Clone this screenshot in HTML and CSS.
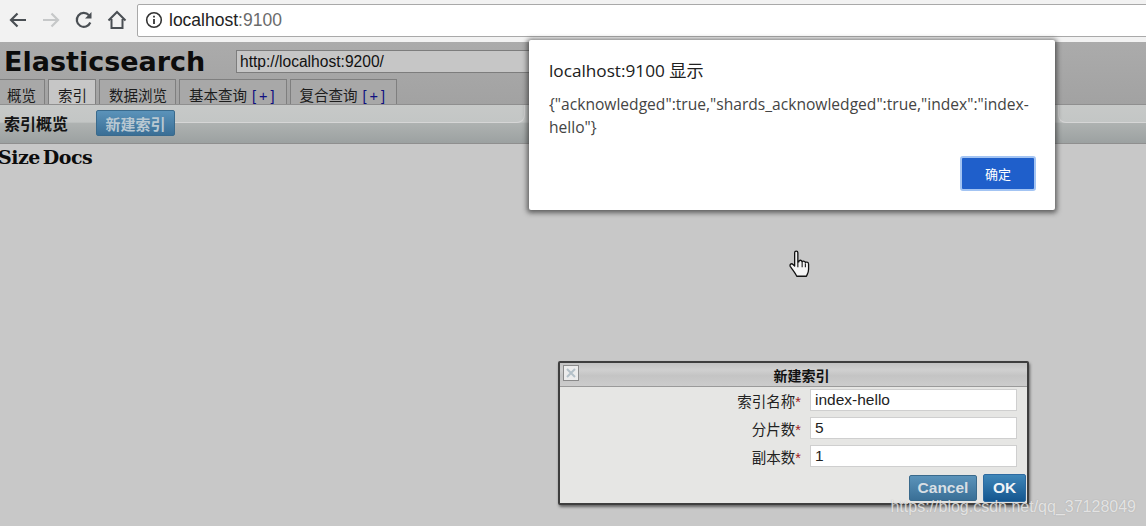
FILE: index.html
```html
<!doctype html>
<html>
    <head>
        <title>Elasticsearch</title>
        <meta charset="utf-8">
        <link rel="stylesheet" href="styles.css">
    </head>

    <body>
        <div class="toolbar">
            <svg class="nav" width="24" height="24" viewBox="0 0 24 24"><path d="M20 12H5M11.500 5.500L5 12l6.500 6.500" fill="none" stroke="#4a4f54" stroke-width="2.200"/></svg>
            <svg class="nav" width="24" height="24" viewBox="0 0 24 24"><path d="M4 12h15M12.500 5.500L19 12l-6.500 6.500" fill="none" stroke="#c6c8c9" stroke-width="2.200"/></svg>
            <svg class="nav" width="24" height="24" viewBox="0 0 24 24"><path d="M18.300 14.500A7 7 0 1 1 17 7.200" fill="none" stroke="#4a4f54" stroke-width="2.200"/><path d="M19.500 4v6.500H13z" fill="#4a4f54"/></svg>
            <svg class="nav" width="24" height="24" viewBox="0 0 24 24"><path d="M3.500 12.500L12 4l8.500 8.500M6.500 11v9h11v-9" fill="none" stroke="#4a4f54" stroke-width="2"/></svg>
            <div class="omnibox">
                <svg width="18" height="18" viewBox="0 0 16 16"><circle cx="8" cy="8" r="6.500" fill="none" stroke="#333" stroke-width="1.400"/><path d="M8 7v4.500M8 4.200v1.600" stroke="#333" stroke-width="1.600"/></svg>
                <span class="host">localhost<span class="port">:9100</span></span>
            </div>
        </div>

        <div class="page">
            <div class="header">
                <div class="title_row">
                    <h1>Elasticsearch</h1>
                    <input class="cluster" type="text" value="http://localhost:9200/">
                </div>
                <div class="tabs">
                    <div class="tab">概览</div>
                    <div class="tab active">索引</div>
                    <div class="tab">数据浏览</div>
                    <div class="tab">基本查询 <span class="plus">[+]</span></div>
                    <div class="tab">复合查询 <span class="plus">[+]</span></div>
                </div>
            </div>

            <div class="subbar">
                <span class="subtitle">索引概览</span>
                <div class="btn new_index">新建索引</div>
                <div class="subbar_line left"></div>
                <div class="subbar_line right"></div>
            </div>

            <div class="table_head"><span>Size</span><span>Docs</span></div>
        </div>

        <div class="alert">
            <div class="alert_title">localhost:9100 显示</div>
            <div class="alert_msg">{"acknowledged":true,"shards_acknowledged":true,"index":"index-hello"}</div>
            <div class="alert_foot"><div class="alert_ok">确定</div></div>
        </div>

        <svg class="cursor" width="24" height="30" viewBox="0 0 22 28">
            <path d="M6 2.500c0-2 3-2 3 0V11l1 0c0-2 3-2 3 0.500 0-1.500 3-1.500 3 0.500 0-1 3-1 3 1v5c0 3-1 4-2 6.500H8c-1-2.500-3-5-6-9-1-2 1-3.500 2.500-2L6 15z" fill="#f4f4f4" stroke="#111" stroke-width="1.200" stroke-linejoin="round"/>
            <path d="M9 11v5M13 12v4M16 12.500V16" stroke="#111" stroke-width="1"/>
        </svg>

        <div class="dialog">
            <div class="dialog_head">
                <div class="dialog_close">
                    <svg width="12" height="12" viewBox="0 0 12 12"><path d="M2 2l8 8M10 2l-8 8" stroke="#b4c0c8" stroke-width="2"/></svg>
                </div>
                <span>新建索引</span>
            </div>
            <div class="dialog_body">
                <div class="field">
                    <label>索引名称<em>*</em></label>
                    <input type="text" value="index-hello">
                </div>
                <div class="field">
                    <label>分片数<em>*</em></label>
                    <input type="text" value="5">
                </div>
                <div class="field">
                    <label>副本数<em>*</em></label>
                    <input type="text" value="1">
                </div>
                <div class="dialog_foot">
                    <div class="btn cancel">Cancel</div>
                    <div class="btn ok">OK</div>
                </div>
            </div>
        </div>

        <div class="watermark">https://blog.csdn.net/qq_37128049</div>
    </body>
</html>
```

FILE: styles.css
```css
html, body{
    margin: 0px;
    padding: 0px;
    height: 526px;
    overflow: hidden;
}

body{
    position: relative;
    background: #c8c8c8;
    font-family: "Liberation Sans", "Noto Sans CJK SC", sans-serif;
    color: #111;
}

.toolbar{
    display: flex;
    align-items: center;
    box-sizing: border-box;
    height: 42px;
    padding: 0px 4px 2px 6px;
    background: #f2f2f2;
}

.nav{
    flex: none;
    margin-right: 9px;
}

.nav:nth-child(4){
    margin-right: 8px;
}

.omnibox{
    flex: 1;
    display: flex;
    align-items: center;
    gap: 6px;
    box-sizing: border-box;
    height: 33px;
    padding-left: 7px;
    margin-right: -8px;
    background: #fff;
    border: 1px solid #a9a9a9;
    border-radius: 2px;
}

.host{
    font-size: 17.500px;
    color: #222;
}

.port{
    color: #6b6b6b;
}

.page{
    display: flex;
    flex-direction: column;
}

.header{
    display: flex;
    flex-direction: column;
    height: 62px;
    background: linear-gradient(#ababab, #a2a2a2);
}

.title_row{
    display: flex;
    align-items: center;
    height: 37px;
    padding-left: 4px;
}

h1{
    width: 232px;
    margin: 2px 0px 0px 0px;
    font-family: "DejaVu Sans", sans-serif;
    font-size: 27px;
    font-weight: bold;
    color: #0c0c0c;
}

.cluster{
    box-sizing: border-box;
    width: 300px;
    height: 23px;
    margin-top: 2px;
    padding: 0px 3px;
    background: #c6c6c6;
    border: 1px solid #7d7d7d;
    font-family: "Liberation Sans", sans-serif;
    font-size: 15.600px;
    color: #111;
}

.tabs{
    display: flex;
    align-items: flex-end;
    gap: 3px;
    height: 25px;
}

.tab{
    box-sizing: border-box;
    height: 25px;
    padding: 7px 8px 0px 9px;
    background: #a8a8a8;
    border: 1px solid #7f7f7f;
    border-bottom: none;
    font-size: 14.500px;
    line-height: 18px;
    color: #1c1c1c;
    white-space: nowrap;
}

.tab:first-child{
    border-left: none;
    width: 45px;
    padding-left: 7px;
    padding-right: 0px;
}

.tab.active{
    width: 48px;
    padding-left: 9px;
    padding-right: 0px;
    background: #c6c6c6;
}

.plus{
    margin-left: 1px;
    color: #101080;
    letter-spacing: 3px;
}

.subbar{
    position: relative;
    display: flex;
    align-items: center;
    box-sizing: border-box;
    height: 40px;
    padding: 0px 0px 3px 4px;
    background: linear-gradient(#c7c9c8, #c3c6c5 45%, #aeb2b1 48%, #9ca1a1);
    border-top: 1px solid #8f8f8f;
    border-bottom: 1px solid #8f8f8f;
}

.subtitle{
    width: 92px;
    font-size: 16px;
    font-weight: bold;
    color: #141414;
}

.subbar_line{
    position: absolute;
    top: 0px;
    height: 17px;
    border-bottom: 1px solid #d6d6d6;
}

.subbar_line.left{
    left: 174px;
    width: 350px;
    border-right: 1px solid #d6d6d6;
    border-bottom-right-radius: 8px;
}

.subbar_line.right{
    left: 1058px;
    right: 0px;
    border-left: 1px solid #d6d6d6;
    border-bottom-left-radius: 8px;
}

.btn{
    box-sizing: border-box;
    display: flex;
    align-items: center;
    justify-content: center;
    background: linear-gradient(#5b93ba, #3a6f96);
    border: 1px solid #3a6a8c;
    border-radius: 2px;
    font-weight: bold;
    color: #d8dfe4;
}

.new_index{
    position: relative;
    z-index: 1;
    width: 79px;
    height: 26px;
    margin-top: 1px;
    font-size: 15px;
    color: #b9c8d2;
}

.table_head{
    display: flex;
    gap: 3px;
    margin: 2px 0px 0px -2px;
    font-family: "DejaVu Serif", serif;
    font-size: 19px;
    font-weight: bold;
    letter-spacing: -0.500px;
    color: #0c0c0c;
}

.alert{
    position: absolute;
    top: 40px;
    left: 529px;
    box-sizing: border-box;
    display: flex;
    flex-direction: column;
    width: 526px;
    height: 170px;
    padding: 20px 19px 0px 20px;
    background: #fff;
    border-radius: 2px;
    box-shadow: 0px 1px 5px 2px rgba(40, 40, 40, 0.650);
}

.alert_title{
    font-family: "Open Sans", "Noto Sans CJK SC", sans-serif;
    font-size: 17.200px;
    line-height: 22px;
    color: #202020;
}

.alert_msg{
    margin-top: 11px;
    font-family: "Open Sans", sans-serif;
    font-size: 15.600px;
    line-height: 23px;
    color: #444;
}

.alert_foot{
    display: flex;
    justify-content: flex-end;
    margin-top: 17px;
}

.alert_ok{
    display: flex;
    align-items: center;
    justify-content: center;
    box-sizing: border-box;
    width: 76px;
    height: 35px;
    background: #1f5fcb;
    border: 2px solid #a3c4f3;
    border-radius: 3px;
    font-size: 13px;
    color: #fff;
}

.cursor{
    position: absolute;
    top: 250px;
    left: 788px;
}

.dialog{
    position: absolute;
    top: 361px;
    left: 558px;
    box-sizing: border-box;
    width: 471px;
    height: 144px;
    background: #e6e6e4;
    border: 2px solid #3e3e3e;
    border-radius: 2px;
    box-shadow: 1px 2px 3px rgba(30, 30, 30, 0.600);
}

.dialog_head{
    position: relative;
    display: flex;
    align-items: center;
    justify-content: center;
    box-sizing: border-box;
    height: 24px;
    padding-left: 16px;
    background: linear-gradient(#c2c2c2, #d0d0d0 30%, #c4c4c4 55%, #cccccc);
    border-bottom: 1px solid #9a9a9a;
    font-size: 14px;
    font-weight: bold;
}

.dialog_close{
    position: absolute;
    top: 2px;
    left: 3px;
    display: flex;
    align-items: center;
    justify-content: center;
    box-sizing: border-box;
    width: 16px;
    height: 16px;
    background: #ececec;
    border: 1px solid #8a8a8a;
}

.dialog_body{
    display: flex;
    flex-direction: column;
    gap: 6px;
    padding: 2px 10px 0px 0px;
}

.field{
    display: flex;
    align-items: center;
    justify-content: flex-end;
    gap: 9px;
    height: 22px;
}

.field label{
    font-size: 14.500px;
    color: #222;
}

.field em{
    font-style: normal;
    color: #a02020;
}

.field input{
    box-sizing: border-box;
    width: 207px;
    height: 22px;
    padding: 0px 4px;
    background: #fff;
    border: 1px solid #cfcfcf;
    font-family: "Liberation Sans", sans-serif;
    font-size: 15.500px;
    color: #222;
}

.dialog_foot{
    display: flex;
    justify-content: flex-end;
    gap: 6px;
    margin: 1px -9px 0px 0px;
}

.cancel{
    width: 68px;
    height: 26px;
    margin-top: 1px;
    font-size: 15.500px;
}

.ok{
    width: 43px;
    height: 28px;
    background: linear-gradient(#3f86b8, #14568f);
    border-color: #2d6aa0;
    font-size: 15.500px;
    color: #f0f4f8;
}

.watermark{
    position: absolute;
    top: 498px;
    right: 10px;
    font-size: 16px;
    color: rgba(255, 255, 255, 0.700);
    text-shadow: 0px 0px 1px rgba(120, 120, 120, 0.500);
}
```
